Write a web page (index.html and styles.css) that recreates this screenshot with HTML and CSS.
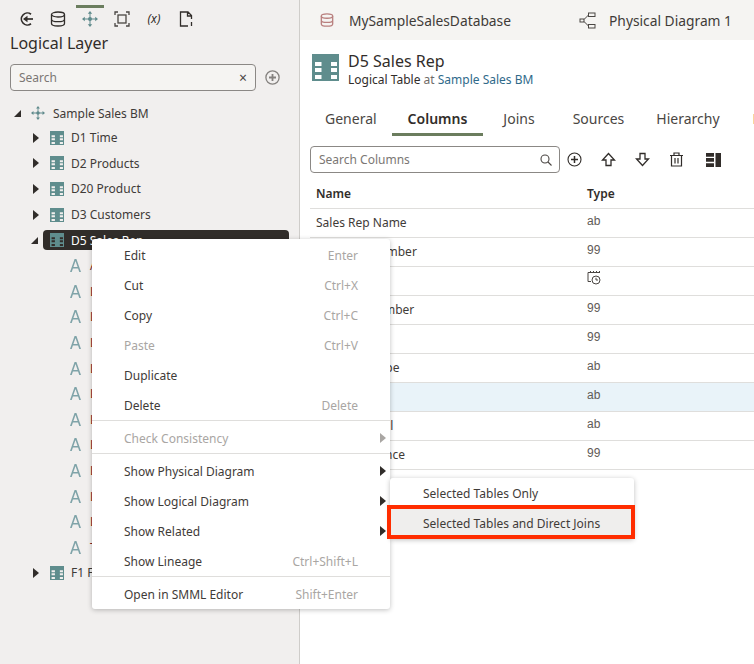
FILE: index.html
```html
<!DOCTYPE html>
<html>
	<head>
		<title>Logical Layer</title>
		<link rel="stylesheet" href="styles.css">
	</head>
	<body>
		<svg class="defs" width="0" height="0">
			<symbol id="tbl" viewBox="0 0 27 27">
				<path fill="#5f8d8d" fill-rule="evenodd" d="M0 0h27v27H0zM3 8v4h6.500V8zM3 14v4h6.500v-4zM3 21v4h6.500v-4zM19 8v4h6V8zM19 14v4h6v-4zM19 21v4h6v-4z"/>
			</symbol>
			<symbol id="move" viewBox="0 0 16 16">
				<g fill="#5f8a8b">
					<circle cx="8" cy="8" r="2"/>
					<path d="M8 0l2.200 2.800H5.800zM8 16l2.200-2.800H5.800zM0 8l2.800-2.200v4.400zM16 8l-2.800-2.200v4.400z"/>
					<path d="M7.500 2h1v12h-1zM2 7.500h12v1H2z"/>
				</g>
			</symbol>
			<symbol id="attr" viewBox="0 0 12 14">
				<path fill="#7fa3a8" d="M5 0h2l5 14h-1.900l-1.300-3.800H3.200L1.900 14H0zM3.700 8.700h4.600L6 2.200z"/>
			</symbol>
		</svg>

		<div class="app">
			<aside class="left">
				<nav class="iconbar">
					<span class="ib"><svg width="16" height="16" viewBox="0 0 16 16" fill="none" stroke="#312d2a" stroke-width="1.700"><path d="M13 3.200A6 6 0 1 0 13 12.800"/><path d="M15 8H6.500"/><path fill="#312d2a" stroke="none" d="M9.500 4.800v6.400L5 8z"/></svg></span>
					<span class="ib"><svg width="16" height="16" viewBox="0 0 16 16" fill="none" stroke="#312d2a" stroke-width="1.300"><ellipse cx="8" cy="3.500" rx="6.500" ry="2.500"/><path d="M1.500 3.500v9c0 1.400 2.900 2.500 6.500 2.500s6.500-1.100 6.500-2.500v-9M1.500 8.200c0 1.400 2.900 2.500 6.500 2.500s6.500-1.100 6.500-2.500"/></svg></span>
					<span class="ib ib-on"><svg width="16" height="16"><use href="#move"/></svg></span>
					<span class="ib"><svg width="16" height="16" viewBox="0 0 16 16" fill="none" stroke="#4a4643" stroke-width="1.300"><path d="M1 4V1h3M12 1h3v3M15 12v3h-3M4 15H1v-3"/><rect x="4" y="4" width="8" height="8"/></svg></span>
					<span class="ib ib-fx">(x)</span>
					<span class="ib"><svg width="16" height="16" viewBox="0 0 16 16" fill="none" stroke="#312d2a" stroke-width="1.300"><path d="M10 15H2.500V1H10l3.500 3.500V8M9.500 1v4h4M13.500 11v4"/></svg></span>
				</nav>
				<h1 class="panel-title">Logical Layer</h1>
				<div class="search-row">
					<div class="search search-left">
						<span class="ph">Search</span>
						<span class="clear">×</span>
					</div>
					<svg class="plus" width="15" height="15" viewBox="0 0 15 15" fill="none" stroke="#85827f" stroke-width="1.300"><circle cx="7.500" cy="7.500" r="6.600"/><path stroke-width="1.800" d="M7.500 4v7M4 7.500h7"/></svg>
				</div>

				<ul class="tree">
					<li class="node root"><i class="tw tw-open"></i><svg width="14" height="14"><use href="#move"/></svg><span>Sample Sales BM</span></li>
					<li class="node tbl"><i class="tw"></i><svg width="14" height="14"><use href="#tbl"/></svg><span>D1 Time</span></li>
					<li class="node tbl"><i class="tw"></i><svg width="14" height="14"><use href="#tbl"/></svg><span>D2 Products</span></li>
					<li class="node tbl"><i class="tw"></i><svg width="14" height="14"><use href="#tbl"/></svg><span>D20 Product</span></li>
					<li class="node tbl"><i class="tw"></i><svg width="14" height="14"><use href="#tbl"/></svg><span>D3 Customers</span></li>
					<li class="node tbl sel"><i class="tw tw-open"></i><svg width="14" height="14"><use href="#tbl"/></svg><span>D5 Sales Rep</span></li>
					<li class="node col"><svg width="11" height="13"><use href="#attr"/></svg><span>Address</span></li>
					<li class="node col"><svg width="11" height="13"><use href="#attr"/></svg><span>Level</span></li>
					<li class="node col"><svg width="11" height="13"><use href="#attr"/></svg><span>Level</span></li>
					<li class="node col"><svg width="11" height="13"><use href="#attr"/></svg><span>Level</span></li>
					<li class="node col"><svg width="11" height="13"><use href="#attr"/></svg><span>Level</span></li>
					<li class="node col"><svg width="11" height="13"><use href="#attr"/></svg><span>Level</span></li>
					<li class="node col"><svg width="11" height="13"><use href="#attr"/></svg><span>Level</span></li>
					<li class="node col"><svg width="11" height="13"><use href="#attr"/></svg><span>Level</span></li>
					<li class="node col"><svg width="11" height="13"><use href="#attr"/></svg><span>Level</span></li>
					<li class="node col"><svg width="11" height="13"><use href="#attr"/></svg><span>Level</span></li>
					<li class="node col"><svg width="11" height="13"><use href="#attr"/></svg><span>Level</span></li>
					<li class="node col"><svg width="11" height="13"><use href="#attr"/></svg><span>Type</span></li>
					<li class="node tbl"><i class="tw"></i><svg width="14" height="14"><use href="#tbl"/></svg><span>F1 Facts</span></li>
				</ul>
			</aside>

			<main class="right">
				<div class="topbar">
					<span class="doc doc-db">
						<svg width="14" height="14" viewBox="0 0 16 16" fill="none" stroke="#b9807f" stroke-width="1.500"><ellipse cx="8" cy="3.500" rx="6.500" ry="2.500"/><path d="M1.500 3.500v9c0 1.400 2.900 2.500 6.500 2.500s6.500-1.100 6.500-2.500v-9M1.500 8.200c0 1.400 2.900 2.500 6.500 2.500s6.500-1.100 6.500-2.500"/></svg>
						MySampleSalesDatabase
					</span>
					<span class="doc doc-diagram">
						<svg width="17" height="17" viewBox="0 0 17 17" fill="none" stroke="#4a4643" stroke-width="1"><rect x="9.500" y="1" width="6.500" height="3.500"/><rect x="9.500" y="12.500" width="6.500" height="3.500"/><rect x="1" y="7" width="4" height="3"/><path d="M5 7.500L9.500 3M5 9.500l4.500 4.500"/></svg>
						Physical Diagram 1
					</span>
				</div>

				<header class="head">
					<svg width="27" height="27"><use href="#tbl"/></svg>
					<div>
						<h2>D5 Sales Rep</h2>
						<p>Logical Table <em>at</em> <a href="#">Sample Sales BM</a></p>
					</div>
				</header>

				<div class="tabs">
					<span class="tab">General</span>
					<span class="tab tab-on">Columns</span>
					<span class="tab">Joins</span>
					<span class="tab">Sources</span>
					<span class="tab">Hierarchy</span>
					<span class="tab">Data</span>
				</div>

				<div class="toolbar">
					<div class="search search-cols">
						<span class="ph">Search Columns</span>
						<svg width="12" height="12" viewBox="0 0 12 12" fill="none" stroke="#4a4643" stroke-width="1.100"><circle cx="5" cy="5" r="4"/><path d="M8 8l3.500 3.500"/></svg>
					</div>
					<svg class="tool" width="15" height="15" viewBox="0 0 15 15" fill="none" stroke="#312d2a" stroke-width="1.100"><circle cx="7.500" cy="7.500" r="6.500"/><path stroke-width="1.500" d="M7.500 4v7M4 7.500h7"/></svg>
					<svg class="tool" width="15" height="15" viewBox="0 0 15 15" fill="none" stroke="#312d2a" stroke-width="1.300"><path d="M7.500 1.500L1.500 8h3.500v5.500h5V8h3.500z"/></svg>
					<svg class="tool" width="15" height="15" viewBox="0 0 15 15" fill="none" stroke="#312d2a" stroke-width="1.300"><path d="M7.500 13.500L1.500 7h3.500V1.500h5V7h3.500z"/></svg>
					<svg class="tool" width="15" height="15" viewBox="0 0 15 15" fill="none" stroke="#312d2a" stroke-width="1.200"><path d="M1 3.500h13M5 3.500V1h5v2.500M2.500 3.500V14h10V3.500M6 6v5.500M9 6v5.500"/></svg>
					<svg class="tool tool-cols" width="15" height="14" viewBox="0 0 15 14"><path fill="#312d2a" d="M0 0h8v3.800H0zM0 5h8v3.800H0zM0 10.200h8V14H0zM9.500 0H15v14H9.500z"/></svg>
				</div>

				<table class="cols">
					<tr><th>Name</th><th>Type</th></tr>
					<tr><td>Sales Rep Name</td><td class="ty">ab</td></tr>
					<tr><td>Manager Number</td><td class="ty">99</td></tr>
					<tr><td>Hire Date</td><td class="ty"><svg width="14" height="15" viewBox="0 0 14 15" fill="none" stroke="#4a4643" stroke-width="1"><path d="M1 7V2.500h11M1 7v4.500h3M3.500 1v2M6.500 1v2M9.500 1v2M12.500 1v2"/><circle cx="9" cy="10" r="4"/><path d="M9 7.800V10h2"/></svg></td></tr>
					<tr><td>Territory Number</td><td class="ty">99</td></tr>
					<tr><td>Sales Rep Id</td><td class="ty">99</td></tr>
					<tr><td>Sales Rep Type</td><td class="ty">ab</td></tr>
					<tr class="row-on"><td>Region</td><td class="ty">ab</td></tr>
					<tr><td>Contact Email</td><td class="ty">ab</td></tr>
					<tr><td>Sales Allowance</td><td class="ty">99</td></tr>
				</table>
			</main>
		</div>

		<div class="menu">
			<ul>
				<li><span>Edit</span><kbd>Enter</kbd></li>
				<li><span>Cut</span><kbd>Ctrl+X</kbd></li>
				<li><span>Copy</span><kbd>Ctrl+C</kbd></li>
				<li class="off"><span>Paste</span><kbd>Ctrl+V</kbd></li>
				<li><span>Duplicate</span></li>
				<li><span>Delete</span><kbd>Delete</kbd></li>
			</ul>
			<ul>
				<li class="off sub"><span>Check Consistency</span></li>
			</ul>
			<ul>
				<li class="sub"><span>Show Physical Diagram</span></li>
				<li class="sub"><span>Show Logical Diagram</span></li>
				<li class="sub"><span>Show Related</span></li>
				<li><span>Show Lineage</span><kbd>Ctrl+Shift+L</kbd></li>
			</ul>
			<ul>
				<li><span>Open in SMML Editor</span><kbd>Shift+Enter</kbd></li>
			</ul>
		</div>

		<div class="submenu">
			<div class="subitem">Selected Tables Only</div>
			<div class="subitem subitem-on">Selected Tables and Direct Joins</div>
		</div>
	</body>
</html>
```

FILE: styles.css
```css
* {
	box-sizing: border-box;
}
html, body {
	margin: 0;
	height: 100%;
	overflow: hidden;
}
body {
	font-family: "Noto Sans", "Liberation Sans", sans-serif;
	color: #312d2a;
	background-color: #fff;
}
ul {
	list-style: none;
	margin: 0;
	padding: 0;
}
.defs {
	position: absolute;
}
.app {
	display: flex;
	height: 664px;
}

/* left panel */
.left {
	width: 300px;
	flex: none;
	background-color: #f1efee;
	border-right: 1px solid #cfcdca;
	padding-top: 5px;
}
.iconbar {
	display: flex;
	padding-left: 10px;
}
.ib {
	width: 32px;
	height: 24px;
	display: flex;
	align-items: center;
	justify-content: center;
	border-top: 3px solid transparent;
}
.ib-on {
	width: 28px;
	margin: 0 2px;
	border-top-color: #6b7d5e;
}
.ib-fx {
	font-size: 12px;
	font-style: italic;
}
.panel-title {
	font-size: 16px;
	font-weight: 400;
	line-height: 22px;
	margin: 3px 0 0 10px;
}
.search-row {
	display: flex;
	align-items: center;
	margin: 10px 0 0 10px;
}
.search {
	display: flex;
	align-items: center;
	justify-content: space-between;
	border: 1px solid #8b8885;
	border-radius: 4px;
	background-color: #f5f4f2;
	font-size: 12px;
}
.ph {
	color: #7b7774;
}
.search-left {
	width: 246px;
	height: 27px;
	padding: 0 8px;
}
.clear {
	font-size: 14px;
	color: #4a4643;
}
.plus {
	margin-left: 9px;
}
.tree {
	margin-top: 10px;
	font-size: 12px;
	color: #3f3b38;
}
.node {
	display: flex;
	align-items: center;
	height: 25.600px;
	white-space: nowrap;
}
.tw {
	width: 0;
	height: 0;
	border-style: solid;
	border-width: 5px 0 5px 6px;
	border-color: transparent transparent transparent #312d2a;
}
.tw-open {
	width: 0;
	height: 0;
	border-width: 0 0 7px 7px;
	border-color: transparent transparent #312d2a transparent;
}
.root {
	height: 24px;
	padding-left: 14px;
}
.root svg {
	margin-left: 10px;
}
.root span {
	margin-left: 8px;
}
.tbl {
	padding-left: 33px;
}
.tbl svg {
	margin-left: 11px;
}
.tbl span {
	margin-left: 7px;
}
.sel {
	position: relative;
	padding-left: 31px;
}
.sel svg {
	margin-left: 12px;
}
.sel span {
	color: #fff;
}
/* dark pill behind the selected row */
.sel::before {
	content: "";
	position: absolute;
	left: 43px;
	width: 246px;
	top: 3px;
	bottom: 3px;
	border-radius: 4px;
	background-color: #312d2a;
}
.sel svg, .sel span {
	position: relative;
}
.col {
	padding-left: 70px;
}
.col span {
	margin-left: 9px;
	color: #7a1f1f;
}

/* right side */
.right {
	flex: 1;
	min-width: 0;
	overflow: hidden;
}
.topbar {
	display: flex;
	align-items: center;
	height: 40px;
	background-color: #f5f4f2;
	font-size: 13.800px;
	color: #3f3b38;
	white-space: nowrap;
}
.doc {
	display: flex;
	align-items: center;
}
.doc-db {
	padding-left: 20px;
	gap: 15px;
}
.doc-diagram {
	margin-left: 68px;
	gap: 13px;
}
.head {
	display: flex;
	gap: 9px;
	padding: 14px 0 0 12px;
}
.head h2 {
	font-size: 16px;
	font-weight: 400;
	line-height: 20px;
	margin: -3px 0 0;
}
.head p {
	font-size: 12px;
	line-height: 16px;
	margin: 1px 0 0;
}
.head em {
	font-style: normal;
	color: #6f6b68;
}
.head a {
	color: #2f6a8a;
	text-decoration: none;
}
.tabs {
	display: flex;
	margin-top: 14px;
	padding-left: 9px;
	font-size: 14px;
	color: #4a4643;
	white-space: nowrap;
}
.tab {
	padding: 7px 16px 5px;
	line-height: 19px;
	border-bottom: 3px solid transparent;
}
.tab:nth-child(1) {
	margin-right: -1px;
}
.tab:nth-child(2) {
	margin-right: 4px;
}
.tab:nth-child(3) {
	margin-right: 6px;
}
.tab:nth-child(5) {
	margin-right: 1px;
}
.tab-on {
	font-weight: 600;
	color: #312d2a;
	border-bottom-color: #6b7d5e;
}
.toolbar {
	display: flex;
	align-items: center;
	margin: 10px 0 0 10px;
}
.search-cols {
	width: 250px;
	height: 27px;
	padding: 0 7px 0 8px;
	background-color: #fff;
}
.tool {
	margin-left: 19px;
}
.search-cols + .tool {
	margin-left: 7px;
}
.tool-cols {
	margin-left: 22px;
}
.cols {
	width: 444px;
	margin: 7px 0 0 10px;
	border-collapse: collapse;
	font-size: 12px;
}
.cols th {
	height: 28px;
	text-align: left;
	font-weight: 600;
	padding: 0 6px;
	border-bottom: 1px solid #dfdedc;
}
.cols td {
	height: 29px;
	padding: 0 6px;
	color: #3f3b38;
	border-bottom: 1px solid #dfdedc;
}
.cols td:first-child, .cols th:first-child {
	width: 271px;
}
.cols td:last-child {
	padding-left: 6px;
	padding-bottom: 3px;
	font-family: "Liberation Sans", sans-serif;
	color: #5f5b58;
}
.row-on td {
	background-color: #e9f3f9;
}

/* menus float over the page */
.menu {
	position: absolute;
	left: 92px;
	top: 239px;
	width: 298px;
	background-color: #fff;
	border-radius: 3px;
	box-shadow: 0 1px 5px rgba(0,0,0,0.25);
	font-size: 12px;
	color: #3f3b38;
}
.menu ul {
	padding-top: 2px;
	border-bottom: 1px solid #dfdedc;
}
.menu ul:first-child {
	padding-top: 1px;
}
.menu ul:last-child {
	border-bottom: 0;
}
.menu li {
	position: relative;
	display: flex;
	justify-content: space-between;
	align-items: center;
	height: 30px;
	padding: 0 32px;
}
.menu kbd {
	font-family: inherit;
	color: #a9a6a3;
}
.menu .off {
	color: #a9a6a3;
}
.menu .sub::after {
	content: "";
	position: absolute;
	right: 4px;
	top: 10px;
	border-style: solid;
	border-width: 5px 0 5px 6px;
	border-color: transparent transparent transparent #312d2a;
}
.menu .off.sub::after {
	border-left-color: #a9a6a3;
}
.submenu {
	position: absolute;
	left: 390px;
	top: 478px;
	width: 244px;
	padding-top: 1px;
	background-color: #fff;
	border-radius: 3px;
	box-shadow: 0 1px 5px rgba(0,0,0,0.25);
	font-size: 12px;
	color: #3f3b38;
}
.subitem {
	height: 30px;
	line-height: 30px;
	padding-left: 33px;
}
.subitem-on {
	height: 34px;
	line-height: 26px;
	margin: -4px -1px 0 -3px;
	padding: 2px 0 0 32px;
	background-color: #efeeed;
	border: 4px solid #ff2d00;
}
```
